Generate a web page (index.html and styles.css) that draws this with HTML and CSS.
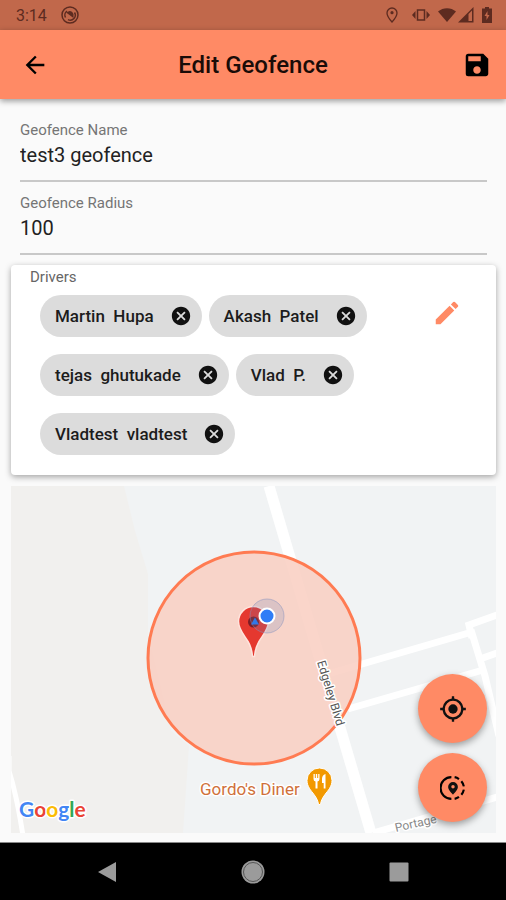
FILE: index.html
```html
<!DOCTYPE html>
<html lang="en">
<head>
<meta charset="utf-8">
<meta name="viewport" content="width=device-width, initial-scale=1">
<title>Edit Geofence</title>
<link rel="stylesheet" href="styles.css">
</head>
<body>
<svg class="sprite" aria-hidden="true">
  <symbol id="cancel" viewBox="0 0 24 24"><path d="M12 2C6.47 2 2 6.47 2 12s4.47 10 10 10 10-4.47 10-10S17.53 2 12 2zm5 13.59L15.59 17 12 13.41 8.41 17 7 15.59 10.59 12 7 8.41 8.41 7 12 10.59 15.59 7 17 8.41 13.41 12 17 15.59z"/></symbol>
</svg>
<div class="screen">
  <div class="status">
    <div class="status-group">
      <span>3:14</span>
      <svg width="18" height="18" viewBox="0 0 18 18" fill="none" stroke="currentColor"><circle cx="9" cy="9" r="8" stroke-width="1.5"/><path d="M4.500 11.500A5 5 0 0 1 6 5M13.500 6.500A5 5 0 0 1 7 13.600" stroke-width="1.500"/><path d="M5 6.500 12.500 12V8.500A4.500 4.500 0 0 0 8.500 5z" fill="currentColor" stroke="none"/></svg>
    </div>
    <div class="status-icons">
      <svg width="12" height="16" viewBox="0 0 12 16"><path d="M6 1a5 5 0 0 1 5 5c0 3.500-5 9-5 9S1 9.500 1 6a5 5 0 0 1 5-5z" fill="none" stroke="currentColor" stroke-width="1.300"/><circle cx="6" cy="5.700" r="1.600" fill="currentColor"/></svg>
      <svg width="18" height="16" viewBox="0 0 18 16" fill="currentColor"><path d="M5.500 3h7v10h-7z" fill="none" stroke="currentColor" stroke-width="1.500"/><path d="M3.500 4v8L0 8zM14.500 4v8L18 8z"/></svg>
      <svg class="wifi" width="18" height="16" viewBox="0 0 18 16" fill="currentColor"><path d="M9 15 0 4.500C5 0 13 0 18 4.500z"/></svg>
      <svg width="16" height="16" viewBox="0 0 16 16"><path d="M0 15.500 15.500 0v15.500z" fill="currentColor"/><path d="M10.500 7 14 3.500V14h-3.500z" fill="#c1684b"/></svg>
      <svg class="battery" width="10" height="16" viewBox="0 0 10 16"><path d="M3 0h4v1.500h3V16H0V1.500h3z" fill="currentColor"/><path d="M5.500 4 2.500 9H4.500v4l3-5H5.500z" fill="#c1684b"/></svg>
    </div>
  </div>
  <header class="appbar">
    <button class="icon-button" aria-label="Back"><svg width="28" height="28" viewBox="0 0 24 24"><path d="M20 11H7.830l5.590-5.590L12 4l-8 8 8 8 1.410-1.410L7.830 13H20v-2z"/></svg></button>
    <h1>Edit Geofence</h1>
    <button class="icon-button save" aria-label="Save"><svg width="30" height="30" viewBox="0 0 24 24"><path d="M17 3H5a2 2 0 0 0-2 2v14a2 2 0 0 0 2 2h14c1.100 0 2-.9 2-2V7l-4-4zm-5 16c-1.660 0-3-1.340-3-3s1.340-3 3-3 3 1.340 3 3-1.340 3-3 3zm3-10H5V5h10v4z"/></svg></button>
  </header>
  <main>
    <form class="fields">
      <div class="field">
        <label for="name">Geofence Name</label>
        <input id="name" type="text" value="test3 geofence">
      </div>
      <div class="field">
        <label for="radius">Geofence Radius</label>
        <input id="radius" type="text" inputmode="numeric" value="100">
      </div>
    </form>
    <section class="drivers">
      <h2>Drivers</h2>
      <div class="drivers-row">
        <ul class="chips">
          <li class="chip"><span>Martin  Hupa</span><button aria-label="Remove Martin Hupa"><svg width="22" height="22"><use href="#cancel"/></svg></button></li>
          <li class="chip"><span>Akash  Patel</span><button aria-label="Remove Akash Patel"><svg width="22" height="22"><use href="#cancel"/></svg></button></li>
          <li class="chip"><span>tejas  ghutukade</span><button aria-label="Remove tejas ghutukade"><svg width="22" height="22"><use href="#cancel"/></svg></button></li>
          <li class="chip"><span>Vlad  P.</span><button aria-label="Remove Vlad P."><svg width="22" height="22"><use href="#cancel"/></svg></button></li>
          <li class="chip"><span>Vladtest  vladtest</span><button aria-label="Remove Vladtest vladtest"><svg width="22" height="22"><use href="#cancel"/></svg></button></li>
        </ul>
        <button class="edit" aria-label="Edit drivers"><svg width="30" height="30" viewBox="0 0 24 24"><path d="M3 17.250V21h3.750L17.810 9.940l-3.750-3.750L3 17.250zM20.710 7.040a1 1 0 0 0 0-1.410l-2.340-2.340a1 1 0 0 0-1.410 0l-1.830 1.830 3.750 3.750 1.830-1.830z"/></svg></button>
      </div>
    </section>
    <section class="map" aria-label="Map">
      <svg class="map-canvas" viewBox="0 0 485 347" preserveAspectRatio="xMidYMid slice">
        <path d="M0 0H485V347H0z" fill="#f1f3f4"/>
        <path d="M0 0H113L124 45 137 88V150L160 245 178 260 172 347H0z" fill="#f1f0ee"/>
        <g fill="none" stroke="#fff" stroke-width="7">
          <path d="M-2 270V285Q6 310 12 350" stroke-width="5"/>
          <path d="M258 0 360 347" stroke-width="11"/>
          <path d="M310 190 461 146M461 152 458 139 486 129M460 144 474 190 488 250"/>
          <path d="M469 173 486 167M337 223 472 184"/>
          <path d="M362 347 486 311"/>
        </g>
        <circle cx="243" cy="172" r="106" fill="#f9cec1" fill-opacity=".85" stroke="#ff7b52" stroke-width="3"/>
        <g class="street">
          <text transform="translate(306 176) rotate(73)">Edgeley Blvd</text>
          <text transform="translate(385 346) rotate(-13)" class="minor">Portage</text>
        </g>
        <text class="place" x="189" y="309">Gordo's Diner</text>
        <path d="M308.500 282a12.500 12.500 0 0 1 12.500 12.500c0 6-4 10-7 14-2.500 3.500-4 6-4.500 10h-2c-.5-4-2-6.500-4.500-10-3-4-7-8-7-14A12.500 12.500 0 0 1 308.500 282z" fill="#f29900" stroke="#fff"/>
        <path d="M302.500 288v5q0 2 2 2.500v7h2v-7q2-.5 2-2.500v-5h-1.300v4h-1v-4h-1.400v4h-1v-4zM314.500 288q-3.500 1-3.500 5v4h1.700v5.500h1.800z" fill="#fff"/>
        <path d="M242.500 120.500a15 15 0 0 1 15 15c0 8-6 14-9.500 20-3 5-4 9-4.500 15h-2c-.5-6-1.500-10-4.500-15-3.500-6-9.500-12-9.500-20a15 15 0 0 1 15-15z" fill="#e5382f" stroke="#ffe3dc" stroke-width="1.500"/>
        <circle cx="242.500" cy="136" r="5.500" fill="#7b1c25"/>
        <circle cx="256" cy="130" r="17" fill="#6880b8" fill-opacity=".2" stroke="#8792bd" stroke-opacity=".5"/>
        <path d="M244 131.500 248 138.500H240z" fill="#3278e8"/>
        <circle cx="256" cy="130" r="7.500" fill="#2f7df6" stroke="#fff" stroke-width="2"/>
        <text class="google" x="8" y="331"><tspan fill="#4285f4">G</tspan><tspan fill="#ea4335">o</tspan><tspan fill="#fbbc05">o</tspan><tspan fill="#4285f4">g</tspan><tspan fill="#34a853">l</tspan><tspan fill="#ea4335">e</tspan></text>
      </svg>
      <div class="map-actions">
        <button class="fab" aria-label="My location"><svg width="28" height="28" viewBox="0 0 24 24"><circle cx="12" cy="12" r="4"/><path d="M20.940 11A9 9 0 0 0 13 3.060V1h-2v2.060A9 9 0 0 0 3.060 11H1v2h2.060A9 9 0 0 0 11 20.940V23h2v-2.060A9 9 0 0 0 20.940 13H23v-2h-2.060zM12 19a7 7 0 1 1 0-14 7 7 0 0 1 0 14z"/></svg></button>
        <button class="fab" aria-label="Geofence location"><svg width="26" height="26" viewBox="0 0 24 24"><path d="M10.500 2A10 10 0 0 0 10.500 22M13.500 2A10 10 0 0 1 17.500 3.700M19.700 5.800A10 10 0 0 1 22 10.500M22 13.500A10 10 0 0 1 19.700 18.200M17.500 20.300A10 10 0 0 1 13.500 22" fill="none" stroke="#000" stroke-width="2"/><path d="M12 6.500a4.500 4.500 0 0 0-4.500 4.500c0 3 4.500 7 4.500 7s4.500-4 4.500-7A4.500 4.500 0 0 0 12 6.500zm0 6a1.600 1.600 0 1 1 0-3.200 1.600 1.600 0 0 1 0 3.200z"/></svg></button>
      </div>
    </section>
  </main>
  <nav class="system-nav">
    <button aria-label="Back"><svg width="24" height="24" viewBox="0 0 24 24"><path d="M3 12 21 2V22z"/></svg></button>
    <button aria-label="Home"><svg width="24" height="24" viewBox="0 0 24 24"><circle cx="12" cy="12" r="11.500"/><circle cx="12" cy="12" r="9.500" fill="none" stroke="#555"/></svg></button>
    <button aria-label="Recent apps"><svg width="24" height="24" viewBox="0 0 24 24"><rect x="2.500" y="2.500" width="19" height="19" rx="1"/></svg></button>
  </nav>
</div>
</body>
</html>
```
FILE: styles.css
```css
* { box-sizing: border-box; }
body { margin: 0; background: #fafafa; color: #222; font-family: Roboto, sans-serif; }
button { display: inline-flex; align-items: center; justify-content: center; border: 0; padding: 0; background: none; color: inherit; cursor: pointer; }
h1, h2, ul { margin: 0; padding: 0; font-weight: 500; }
svg { display: block; }
.sprite { position: absolute; width: 0; height: 0; }
.screen { display: flex; flex-direction: column; min-height: 100vh; }
.status { display: flex; align-items: center; justify-content: space-between; height: 30px; padding: 0 14px 0 16px; background: #c1684b; color: #5d2b20; font-size: 16px; }
.status-group { display: flex; align-items: center; gap: 14px; }
.status-icons { display: flex; align-items: center; gap: 14px; }
.wifi { margin-right: -12px; margin-left: -6px; }
.battery { margin-left: -6px; }
.appbar { display: flex; align-items: center; justify-content: space-between; height: 69px; padding: 0 14px; background: #ff8a65; color: #1a0c08; box-shadow: 0 2px 6px rgba(0, 0, 0, .4); }
.appbar h1 { font-size: 24px; line-height: 28px; }
.icon-button { width: 42px; height: 42px; color: #000; }
.save { justify-content: flex-end; }
main { display: flex; flex: 1; flex-direction: column; padding: 21px 10px 9px 11px; }
.fields { display: grid; gap: 11px; padding: 0 9px; }
.field { display: flex; flex-direction: column; border-bottom: 2px solid #c8c8c8; }
.field label { color: #757575; font-size: 15px; line-height: 20px; }
.field input { width: 100%; height: 40px; padding: 0 0 10px; border: 0; outline: 0; background: none; color: #222; font: 20px/30px Roboto, sans-serif; }
.drivers { margin-top: 10px; padding: 3px 34px 20px 29px; border-radius: 4px; background: #fff; box-shadow: 0 2px 6px rgba(0, 0, 0, .35); }
.drivers h2 { margin-left: -10px; color: #666; font-size: 15px; font-weight: 400; line-height: 18px; }
.drivers-row { display: flex; align-items: flex-start; justify-content: space-between; gap: 16px; padding-top: 9px; }
.chips { display: flex; flex: 1; flex-wrap: wrap; gap: 17px 7px; list-style: none; }
.chip { display: flex; align-items: center; gap: 16px; height: 42px; padding: 0 10px 0 15px; border-radius: 21px; background: #dcdcdc; color: #1c1c1c; font-size: 17px; font-weight: 500; white-space: pre; }
.chip button { color: #111; }
.chip svg, .icon-button svg, .edit svg, .fab svg, .system-nav svg { fill: currentColor; }
.edit { margin-top: 3px; color: #ff8a65; }
.map { position: relative; display: grid; flex: 1; min-height: 320px; margin-top: 11px; overflow: hidden; }
.map-canvas { width: 100%; height: 100%; min-height: 0; }
.map text { paint-order: stroke; stroke: #fff; stroke-width: 3px; stroke-linejoin: round; }
.street { fill: #555; font-size: 12px; }
.map .minor { fill: #888; font-size: 12px; }
.map .place { fill: #d0703a; font-size: 17px; }
.google { font-family: Lato, sans-serif; font-size: 21px; font-weight: 700; }
.map-actions { position: absolute; right: 9px; bottom: 11px; display: grid; gap: 10px; }
.fab { width: 69px; height: 69px; border-radius: 50%; background: #ff8a65; color: #111; box-shadow: 0 3px 7px rgba(0, 0, 0, .35); }
.system-nav { display: flex; align-items: center; justify-content: center; gap: 122px; height: 59px; border-top: 1px solid #888; background: #000; color: #9b9b9b; }
```
